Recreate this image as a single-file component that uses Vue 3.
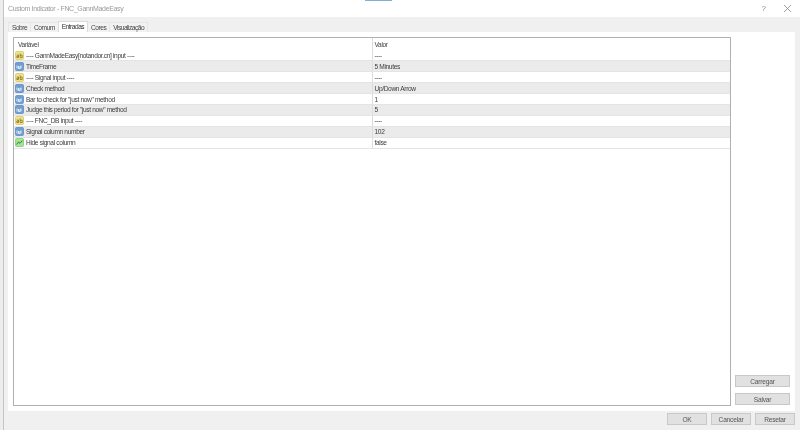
<template>
  <div class="window">
    <div class="taskbar-hint"></div>
    <div class="frame">
      <header class="titlebar">
        <span class="title">Custom Indicator - FNC_GannMadeEasy</span>
        <span class="help">?</span>
        <svg class="close" width="9" height="9" viewBox="0 0 9 9">
          <path d="M1 1L8 8M8 1L1 8" stroke="#8a8a8a" stroke-width="0.8" fill="none" />
        </svg>
      </header>

      <nav class="tabs">
        <span v-for="tab in tabs" :key="tab" class="tab" :class="{ active: tab === 'Entradas' }">{{ tab }}</span>
      </nav>

      <main class="content">
        <section class="list">
          <div class="list-head">
            <span class="col-name">Variável</span>
            <span class="col-value">Valor</span>
          </div>
          <div v-for="row in rows" :key="row.name" class="row">
            <span class="col-name">
              <svg class="icon" width="9" height="9" viewBox="0 0 9 9">
                <rect x="0.5" y="0.5" width="8" height="8" rx="1" :fill="iconColors[row.type].fill" :stroke="iconColors[row.type].line" stroke-width="0.7" />
                <path v-if="row.type === 'bool'" d="M1.5 6.5L3.5 4L5 5.3L7.5 2.5" stroke="#1d8a2a" stroke-width="1" fill="none" />
                <path v-else-if="row.type === 'num'" d="M2 3.5V6.5M3.5 4V6.5H5V4M6 3.5V6.5" stroke="#ffffff" stroke-width="0.8" fill="none" />
                <path v-else d="M1.8 4H3.5V6.5H1.8V5.2H3.5M5.2 2.5V6.5H7.2V4.2H5.2" stroke="#7a6a20" stroke-width="0.7" fill="none" />
              </svg>
              <span>{{ row.name }}</span>
            </span>
            <span class="col-value">{{ row.value }}</span>
          </div>
        </section>

        <aside class="side">
          <button class="btn">Carregar</button>
          <button class="btn">Salvar</button>
        </aside>
      </main>

      <footer class="bottom">
        <button class="btn small">OK</button>
        <button class="btn small">Cancelar</button>
        <button class="btn small">Resetar</button>
      </footer>
    </div>
  </div>
</template>

<script setup>
const tabs = ['Sobre', 'Comum', 'Entradas', 'Cores', 'Visualização']

const iconColors = {
  str: { fill: '#efe08a', line: '#d6c25a' },
  num: { fill: '#6f9ed3', line: '#5686c0' },
  bool: { fill: '#a8e29a', line: '#6fc96a' },
}

const rows = [
  { type: 'str', name: '---- GannMadeEasy[notandor.cn] input ----', value: '----' },
  { type: 'num', name: 'TimeFrame', value: '5 Minutes' },
  { type: 'str', name: '---- Signal input ----', value: '----' },
  { type: 'num', name: 'Check method', value: 'Up/Down Arrow' },
  { type: 'num', name: 'Bar to check for "just now" method', value: '1' },
  { type: 'num', name: 'Judge this period for "just now" method', value: '5' },
  { type: 'str', name: '---- FNC_DB input ----', value: '----' },
  { type: 'num', name: 'Signal column number', value: '102' },
  { type: 'bool', name: 'Hide signal column', value: 'false' },
]
</script>

<style>
html, body {
  margin: 0;
  background: #f0f0f0;
}
</style>

<style scoped>
.window {
  position: relative;
  width: 800px;
  height: 430px;
  overflow: hidden;
  background: #ededed;
  font-family: "Liberation Sans", Arial, sans-serif;
  font-size: 6.6px;
  letter-spacing: -0.35px;
  color: #444;
  filter: blur(0.3px);
}
.taskbar-hint {
  position: absolute;
  top: 0;
  left: 365px;
  width: 27px;
  height: 1px;
  background: #7fb0d6;
}
.frame {
  display: flex;
  flex-direction: column;
  height: 430px;
  margin-left: 3px;
  border-left: 1px solid #c4c4c4;
  background: #f0f0f0;
}
.titlebar {
  display: flex;
  align-items: center;
  height: 17px;
  padding: 0 8.5px 0 4px;
  background: #fff;
  color: #9a9a9a;
  font-size: 7px;
}
.title {
  flex: 1;
}
.help {
  margin-right: 17px;
  font-size: 8px;
  color: #8a8a8a;
}
.tabs {
  display: flex;
  align-items: flex-end;
  height: 15px;
  padding-left: 4px;
  background: #f0f0f0;
  letter-spacing: -0.5px;
}
.tab {
  padding: 0 3px;
  height: 10px;
  line-height: 9px;
  box-sizing: border-box;
  border: 1px solid #e6e6e6;
  border-bottom: none;
  margin-right: -1px;
  background: #f2f2f2;
}
.tab.active {
  height: 11px;
  background: #fff;
  color: #333;
  border-color: #dcdcdc;
  position: relative;
}
.content {
  display: flex;
  flex: 1;
  min-height: 0;
  margin: 0 5px 0 4px;
  padding: 5px 5px 5px 5px;
  background: #fff;
}
.list {
  flex: 1;
  border: 1px solid #b0b0b0;
  background: #fff;
}
.list-head {
  display: flex;
  box-sizing: border-box;
  height: 12.5px;
  align-items: center;
}
.row {
  display: flex;
  align-items: center;
  height: 9.9px;
  border-bottom: 1px solid #e4e4e4;
  color: #3c3c3c;
}
.row:nth-child(odd) {
  background: #ebebeb;
}
.col-name {
  display: flex;
  align-items: center;
  gap: 2px;
  white-space: nowrap;
  width: 358px;
  padding-left: 1px;
  box-sizing: border-box;
}
.list-head .col-name {
  padding-left: 4px;
}
.col-value {
  height: 100%;
  display: flex;
  align-items: center;
  padding-left: 1.5px;
  border-left: 1px solid #dcdcdc;
}
.icon {
  flex: none;
}
.side {
  display: flex;
  flex-direction: column;
  justify-content: flex-end;
  gap: 6px;
  width: 55px;
  margin-left: 4px;
  padding-bottom: 1px;
}
.btn {
  height: 12px;
  padding: 0;
  border: 1px solid #c8c8c8;
  background: #e1e1e1;
  color: #555;
  font: inherit;
  font-size: 6.6px;
  letter-spacing: -0.2px;
}
.bottom {
  display: flex;
  flex: none;
  justify-content: flex-end;
  gap: 4px;
  height: 19px;
  box-sizing: border-box;
  padding: 2px 5px 0 0;
  background: #f0f0f0;
}
.btn.small {
  width: 40px;
}
</style>
